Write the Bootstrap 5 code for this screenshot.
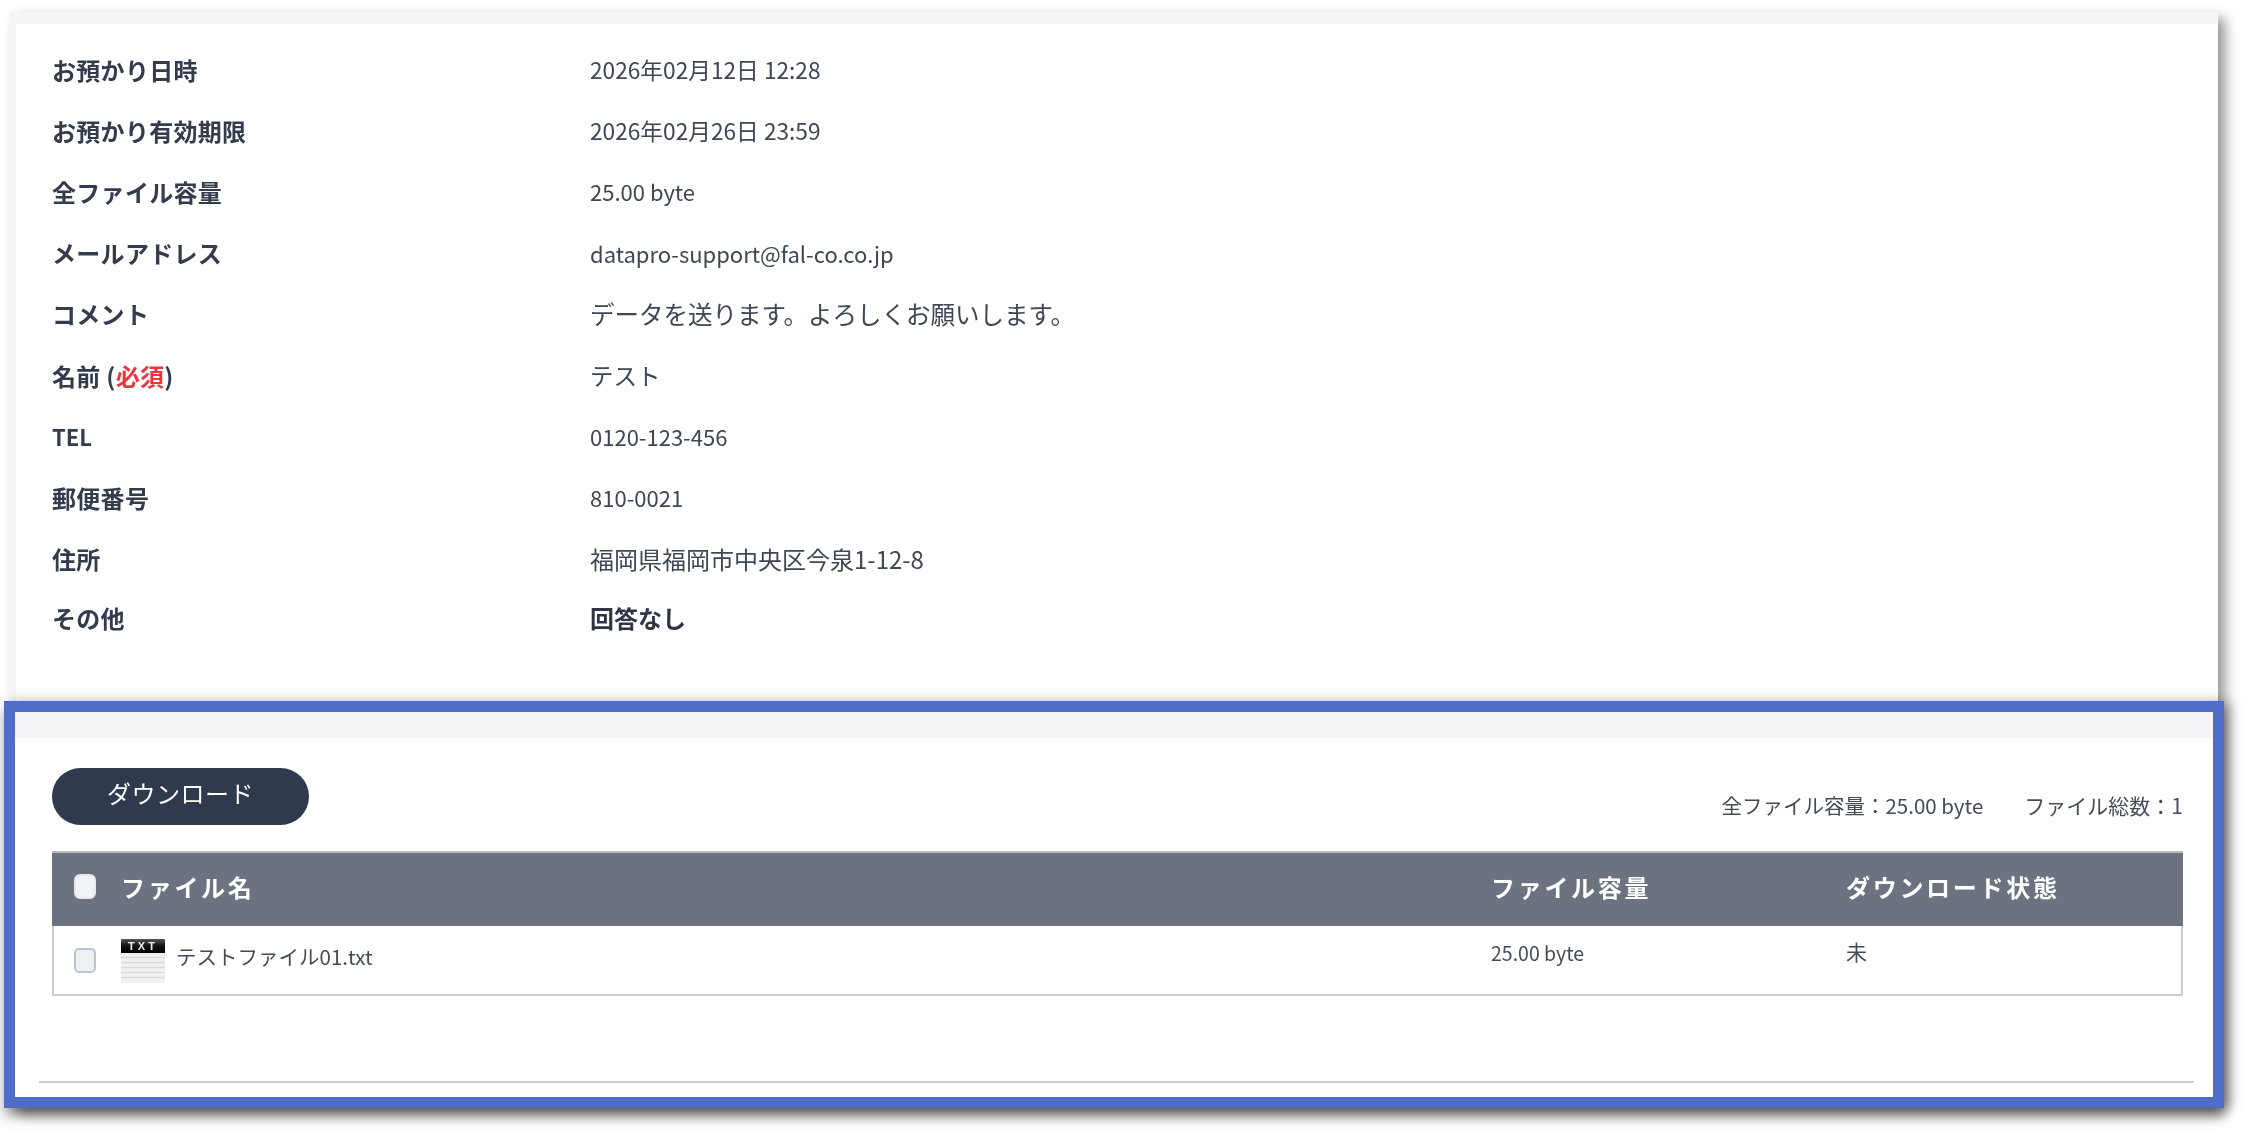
<!DOCTYPE html>
<html lang="ja">
<head>
<meta charset="utf-8">
<title>お預かり情報</title>
<link href="https://cdn.jsdelivr.net/npm/bootstrap@5.3.0/dist/css/bootstrap.min.css" rel="stylesheet">
<style>
html,body{height:100%;background:#fff;overflow:hidden}
body{font-family:"Noto Sans CJK JP","Noto Sans",sans-serif;color:#3d4452}
.shot{margin:12px 32px 0 10px;padding:12px 0 0 6px;background:#f5f5f7;box-shadow:7px 6px 12px rgba(0,0,0,.42);filter:blur(.65px)}
.info-card{background:#fff;padding:15px 0 52px 36px}
.info-row{height:61.2px}
.info-row.tight{margin-top:-2px}
.info-label{width:538px;font-size:24px;font-weight:700;color:#333b4c;letter-spacing:.3px}
.info-label.latin{font-size:22px;letter-spacing:0}
.info-value{font-size:22px;color:#3f4654}
.info-value.when{font-size:22.700px}
.info-value.jp{font-size:23.500px}
.info-value.note{font-size:24.500px}
.info-value.addr{font-size:24px}
.info-value.strong{font-size:24px;font-weight:700;color:#2f3542}
.req{color:#e8383d}
.blue-frame{margin:0 -6px 0 -12px;border:11px solid #4f6dc6;background:#fff;box-shadow:0 8px 12px rgba(0,0,0,.35),8px 0 12px rgba(0,0,0,.25)}
.gray-strip{height:26px;background:#f5f5f7}
.frame-body{padding:30px 30px 14px 37px}
.dl-btn{width:257px;height:57px;background:#2f3a4f;border:0;color:#fff;font-size:24px;line-height:1;letter-spacing:.5px;padding:0 0 6px}
.dl-btn:hover{background:#2f3a4f;color:#fff}
.stats{font-size:21px;color:#444b58;gap:41px;margin-bottom:3px}
.stats .sum{font-size:20.500px}
.bar-gap{margin-top:26px}
.file-table{table-layout:fixed;width:2131px;margin:0;border-collapse:separate;border-spacing:0}
.file-table th,.file-table td{padding:0;border:0;background:transparent}
.file-table thead th{height:75px;background:#6c7280;border-top:2px solid #b9bcc3;color:#fff;font-size:24px;font-weight:700;letter-spacing:2.700px;vertical-align:middle;padding-bottom:5px}
.file-table tbody td{height:70px;background:#fff;border-bottom:2px solid #ccc;vertical-align:top;color:#444b58;font-size:19.500px}
.file-table tbody td:first-child{border-left:2px solid #ccc}
.file-table tbody td:last-child{border-right:2px solid #ccc}
.col-check{width:69px}.col-name{width:1370px}.col-size{width:355px}
.file-check{width:22px;height:25px;margin:0 0 0 22px!important;background-color:#eff0f2;border:2px solid #b8c4d2;border-radius:5px;vertical-align:middle;display:block;float:none}
thead .file-check{background-color:#f2f3f5;border-color:#e6e8eb}
tbody .file-check{margin:22px 0 0 20px!important}
.file-name{gap:11px;padding-top:13px;font-size:20.500px}
.file-name span{padding-top:2px}
.cell-text{padding-top:12px}
.state{font-size:21px;padding-top:10px}
.foot-rule{margin:85px -11px 0 -13px;border:0;border-top:2px solid #ccc;opacity:1}
</style>
</head>
<body>
<div class="shot">
  <div class="info-card">
    <div class="info-row d-flex align-items-center"><div class="info-label">お預かり日時</div><div class="info-value when">2026年02月12日 12:28</div></div>
    <div class="info-row d-flex align-items-center"><div class="info-label">お預かり有効期限</div><div class="info-value when">2026年02月26日 23:59</div></div>
    <div class="info-row d-flex align-items-center"><div class="info-label">全ファイル容量</div><div class="info-value">25.00 byte</div></div>
    <div class="info-row d-flex align-items-center"><div class="info-label">メールアドレス</div><div class="info-value">datapro-support@fal-co.co.jp</div></div>
    <div class="info-row d-flex align-items-center"><div class="info-label">コメント</div><div class="info-value note">データを送ります。よろしくお願いします。</div></div>
    <div class="info-row d-flex align-items-center"><div class="info-label">名前 (<span class="req">必須</span>)</div><div class="info-value jp">テスト</div></div>
    <div class="info-row d-flex align-items-center"><div class="info-label latin">TEL</div><div class="info-value">0120-123-456</div></div>
    <div class="info-row d-flex align-items-center"><div class="info-label">郵便番号</div><div class="info-value">810-0021</div></div>
    <div class="info-row d-flex align-items-center"><div class="info-label">住所</div><div class="info-value addr">福岡県福岡市中央区今泉1-12-8</div></div>
    <div class="info-row tight d-flex align-items-center"><div class="info-label">その他</div><div class="info-value strong">回答なし</div></div>
  </div>
  <section class="blue-frame">
    <div class="gray-strip"></div>
    <div class="frame-body">
      <div class="d-flex justify-content-between align-items-end">
        <button type="button" class="btn rounded-pill dl-btn">ダウンロード</button>
        <div class="d-flex align-items-baseline stats"><span class="sum">全ファイル容量：25.00 byte</span><span>ファイル総数：1</span></div>
      </div>
      <div class="bar-gap">
        <table class="table file-table">
          <colgroup><col class="col-check"><col class="col-name"><col class="col-size"><col></colgroup>
          <thead>
            <tr><th><input class="form-check-input file-check" type="checkbox" aria-label="すべて選択"></th><th>ファイル名</th><th>ファイル容量</th><th>ダウンロード状態</th></tr>
          </thead>
          <tbody>
            <tr>
              <td><input class="form-check-input file-check" type="checkbox" aria-label="選択"></td>
              <td>
                <div class="d-flex file-name">
                  <svg width="44" height="44" viewBox="0 0 44 44" class="flex-shrink-0" aria-hidden="true">
                    <defs><linearGradient id="hd" x1="0" y1="0" x2="0" y2="1"><stop offset="0" stop-color="#555"/><stop offset=".5" stop-color="#111"/><stop offset="1" stop-color="#000"/></linearGradient></defs>
                    <rect x="0" y="14" width="44" height="30" fill="#f1f1f1"/>
                    <path d="M1 0h42a1 1 0 0 1 1 1v13H0V1a1 1 0 0 1 1-1z" fill="url(#hd)"/>
                    <text x="22" y="10.500" text-anchor="middle" fill="#eee" font-family="Liberation Sans" font-size="11" font-weight="700" letter-spacing="3">TXT</text>
                    <path d="M0 18.500h44M0 23.500h44M0 28.500h44M0 33.500h44M0 38.500h44" stroke="#dadada" stroke-width="1.400" fill="none"/>
                  </svg>
                  <span>テストファイル01.txt</span>
                </div>
              </td>
              <td><div class="cell-text">25.00 byte</div></td>
              <td><div class="state">未</div></td>
            </tr>
          </tbody>
        </table>
      </div>
      <hr class="foot-rule">
    </div>
  </section>
</div>
</body>
</html>
